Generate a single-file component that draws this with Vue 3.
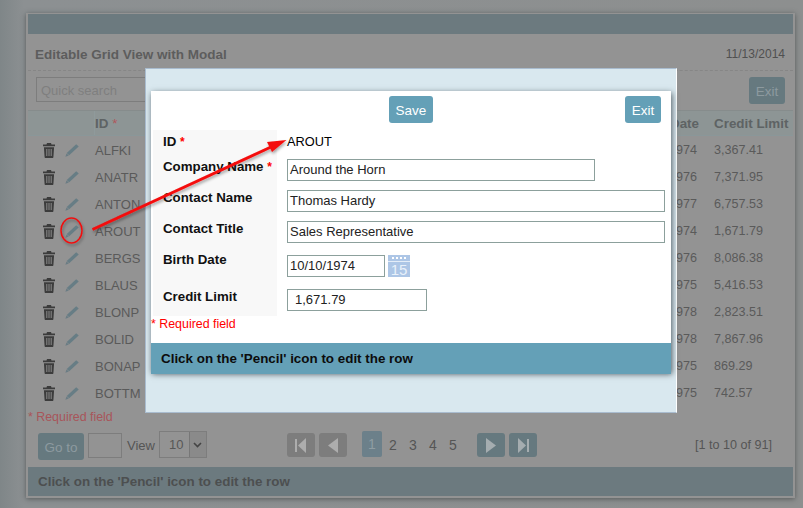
<script setup>
const rows = [
  ['ALFKI', '1974', '3,367.41'],
  ['ANATR', '1976', '7,371.95'],
  ['ANTON', '1977', '6,757.53'],
  ['AROUT', '1974', '1,671.79'],
  ['BERGS', '1976', '8,086.38'],
  ['BLAUS', '1975', '5,416.53'],
  ['BLONP', '1978', '2,823.51'],
  ['BOLID', '1978', '7,867.96'],
  ['BONAP', '1975', '869.29'],
  ['BOTTM', '1975', '742.57'],
]
const fields = [
  { label: 'Company Name', req: true, value: 'Around the Horn', cls: 'f-company' },
  { label: 'Contact Name', value: 'Thomas Hardy', cls: 'f-wide' },
  { label: 'Contact Title', value: 'Sales Representative', cls: 'f-wide' },
]
</script>

<template>
  <div class="page">
    <section class="panel">
      <div class="topbar"></div>
      <header class="title-row">
        <h1>Editable Grid View with Modal</h1>
        <span class="today">11/13/2014</span>
      </header>
      <div class="toolbar">
        <div class="search">
          <span>Quick search</span>
          <svg class="search-ico" width="14" height="14" viewBox="0 0 14 14"><circle cx="9" cy="5" r="3.5" fill="none" stroke="#666" stroke-width="1.5"/><path d="M6.5 7.500 2 12" stroke="#666" stroke-width="2"/></svg>
        </div>
        <button class="btn dim exit-top">Exit</button>
      </div>
      <div class="grid-head">
        <div class="c-act"></div>
        <div class="c-id">ID <em>*</em></div>
        <div class="c-mid"></div>
        <div class="c-date head-date">Date</div>
        <div class="c-credit">Credit Limit</div>
      </div>
      <div v-for="r in rows" :key="r[0]" class="grid-row">
        <div class="c-act">
          <svg class="trash" width="12" height="15" viewBox="0 0 12 15"><path d="M4 0h4l.5 1.400H12v1.800H0V1.400h3.500zM.9 4.200h10.200l-.7 9.800c0 .6-.4 1-1 1H2.600c-.6 0-1-.4-1-1z" fill="#3c3c3c"/><path d="M3.800 6v7M6 6v7M8.200 6v7" stroke="#8a8a8a" stroke-width="1"/></svg>
          <svg class="pencil" width="14" height="13" viewBox="0 0 14 13"><path d="M11.200.3 13.700 2.600 4.200 11.300 1.700 9z" fill="#677d85"/><path d="M1.500 9.400 3.900 11.600.4 12.800z" fill="#6a7c84"/></svg>
        </div>
        <div class="c-id">{{ r[0] }}</div>
        <div class="c-mid"></div>
        <div class="c-date">10/10/{{ r[1] }}</div>
        <div class="c-credit">{{ r[2] }}</div>
      </div>
      <div class="req-back">* Required field</div>
      <div class="pager">
        <button class="btn dim goto">Go to</button>
        <div class="go-input"></div>
        <span class="view">View</span>
        <div class="select"><span>10</span><i><svg width="9" height="6" viewBox="0 0 9 6"><path d="M1 1l3.500 3.500L8 1" fill="none" stroke="#444" stroke-width="1.600"/></svg></i></div>
        <div class="nav gray first">
          <svg width="12" height="15" viewBox="0 0 12 15"><path d="M0 1h2v13H0zM11 0v15L3 7.500z" fill="#adadad"/></svg>
        </div>
        <div class="nav gray">
          <svg width="10" height="15" viewBox="0 0 10 15"><path d="M10 0v15L0 7.500z" fill="#adadad"/></svg>
        </div>
        <div class="pages">
          <span class="on">1</span><span>2</span><span>3</span><span>4</span><span>5</span>
        </div>
        <div class="nav blue">
          <svg width="10" height="15" viewBox="0 0 10 15"><path d="M0 0v15l10-7.500z" fill="#a5adb0"/></svg>
        </div>
        <div class="nav blue">
          <svg width="12" height="15" viewBox="0 0 12 15"><path d="M10 1h2v13h-2zM1 0v15l8-7.500z" fill="#a5adb0"/></svg>
        </div>
        <span class="count">[1 to 10 of 91]</span>
      </div>
      <footer class="foot-back">Click on the 'Pencil' icon to edit the row</footer>
    </section>

    <div class="modal">
      <div class="dialog">
        <div class="dlg-actions">
          <button class="btn save">Save</button>
          <button class="btn exit">Exit</button>
        </div>
        <div class="form">
          <div class="row r-id">
            <div class="lab">ID <em>*</em></div>
            <div class="val id-val">AROUT</div>
          </div>
          <div v-for="f in fields" :key="f.label" class="row">
            <div class="lab">{{ f.label }} <em v-if="f.req">*</em></div>
            <div class="val"><div class="input" :class="f.cls">{{ f.value }}</div></div>
          </div>
          <div class="row r-birth">
            <div class="lab">Birth Date</div>
            <div class="val birth">
              <div class="input f-birth">10/10/1974</div>
              <div class="cal"><span class="cal-top"><b></b><b></b><b></b><b></b></span><span class="cal-num">15</span></div>
            </div>
          </div>
          <div class="row">
            <div class="lab">Credit Limit</div>
            <div class="val"><div class="input f-credit">1,671.79</div></div>
          </div>
        </div>
        <div class="req">* Required field</div>
        <div class="dlg-foot">Click on the 'Pencil' icon to edit the row</div>
      </div>
    </div>

    <svg class="marks" width="803" height="508" viewBox="0 0 803 508">
      <defs>
        <filter id="sh" x="-20%" y="-20%" width="140%" height="140%"><feDropShadow dx="1" dy="2" stdDeviation="1.500" flood-color="#000" flood-opacity=".35"/></filter>
      </defs>
      <g filter="url(#sh)">
        <ellipse cx="71.500" cy="230.500" rx="10.500" ry="12.500" fill="none" stroke="#f01010" stroke-width="1.500"/>
        <path d="M92.500 229.500 271 147" stroke="#f40b0b" stroke-width="3" fill="none"/>
        <path d="M286.500 140 267 142 272 152z" fill="#f40b0b"/>
      </g>
    </svg>
  </div>
</template>

<style>
html, body { margin: 0; }
</style>

<style scoped>
.page {
  position: relative;
  width: 803px;
  height: 508px;
  overflow: hidden;
  padding: 13px 0 0 26px;
  box-sizing: border-box;
  background: linear-gradient(90deg, #7f8688 0, #8c9092 3%, #8d8f8f 100%);
  font: 13px "Liberation Sans", Arial, sans-serif;
  color: #575757;
}
em { font-style: normal; font-weight: normal; color: #b0585c; }
.panel {
  width: 769px;
  height: 485px;
  box-sizing: border-box;
  padding: 1px 2px 0;
  background: #939393;
  box-shadow: 0 1px 5px rgba(40, 45, 45, .55);
  display: flex;
  flex-direction: column;
}
.topbar { height: 20px; background: #6c7a7f; flex: none; }
.title-row {
  height: 37px;
  flex: none;
  display: flex;
  align-items: center;
  justify-content: space-between;
  padding: 4px 8px 0 7px;
  box-sizing: border-box;
  border-bottom: 1px dashed #868686;
}
h1 { margin: 0; font-size: 13.5px; font-weight: bold; color: #5d5d5d; }
.today { font-size: 12px; color: #505050; }
.toolbar {
  height: 39px;
  flex: none;
  display: flex;
  justify-content: space-between;
  align-items: flex-start;
  padding: 6px 8px 0 8px;
  box-sizing: border-box;
}
.search {
  width: 130px;
  height: 25px;
  box-sizing: border-box;
  border: 1px solid #7d7d7d;
  display: flex;
  align-items: center;
  justify-content: space-between;
  padding: 1px 4px 0;
  color: #7f7f7f;
}
.btn {
  border: 0;
  border-radius: 3px;
  font: 13.5px "Liberation Sans", Arial, sans-serif;
  padding: 1px 0 0;
}
.btn.dim { background: #66797f; color: #8d9a9f; }
.exit-top { width: 36px; height: 27px; }
.grid-head, .grid-row { display: flex; align-items: center; flex: none; }
.grid-head {
  height: 26px;
  background: #8d9595;
  font-weight: bold;
  font-size: 13.4px;
  color: #5e6364;
  border-top: 1px solid #868c8c;
  border-bottom: 1px solid #8a9799;
  box-sizing: border-box;
}
.grid-row { height: 27px; box-sizing: border-box; padding-top: 1px; color: #5a5a5a; }
.c-act { width: 67px; height: 100%; display: flex; align-items: center; flex: none; box-sizing: border-box; padding: 0 0 0 15px; gap: 10px; }
.grid-head .c-act { border-right: 1px solid #8f9a9b; }
.c-id { width: 100px; flex: none; }
.c-mid { flex: 1; }
.c-date { width: 80px; flex: none; white-space: nowrap; }
.head-date { text-align: right; padding-right: 15px; box-sizing: border-box; }
.c-credit { width: 79px; flex: none; white-space: nowrap; }
.grid-row .c-date, .grid-row .c-credit { font-size: 12.6px; }
.req-back { height: 21px; flex: none; font-size: 12.4px; line-height: 22px; color: #a8555a; }
.pager {
  height: 40px;
  flex: none;
  display: flex;
  align-items: flex-start;
  padding: 6px 0 0 10px;
  box-sizing: border-box;
}
.goto { width: 46px; height: 27px; }
.go-input { width: 34px; height: 25px; box-sizing: border-box; border: 1px solid #7d7d7d; margin-left: 4px; }
.view { margin-left: 5px; line-height: 25px; color: #555; }
.select {
  width: 48px;
  height: 27px;
  margin: -2px 0 0 4px;
  box-sizing: border-box;
  border: 1px solid #7d7d7d;
  display: flex;
  line-height: 25px;
}
.select span { flex: 1; padding-left: 9px; }
.select i { width: 16px; background: #8a8a8a; border-left: 1px solid #777; display: flex; align-items: center; justify-content: center; }
.nav {
  width: 28px;
  height: 24px;
  border-radius: 3px;
  display: flex;
  align-items: center;
  justify-content: center;
  margin-left: 4px;
}
.nav.gray { background: #7d7d7d; }
.nav.blue { background: #66797f; }
.nav.first { margin-left: 80px; }
.pages { display: flex; align-items: center; width: 111px; margin-left: 15px; height: 24px; }
.pages span { width: 20px; text-align: center; line-height: 24px; color: #555; font-size: 14px; }
.pages .on { background: #6c808a; color: #8f9da3; height: 26px; line-height: 26px; margin-top: -2px; border-radius: 2px; margin-right: 1px; }
.count { margin-left: auto; margin-right: 21px; line-height: 25px; font-size: 12.6px; color: #555; white-space: nowrap; }
.foot-back {
  height: 29px;
  flex: none;
  background: #6c7a7f;
  font-weight: bold;
  font-size: 13.4px;
  line-height: 30px;
  padding-left: 10px;
  color: #4d4f50;
}

.modal {
  position: absolute;
  left: 145px;
  top: 68px;
  width: 532px;
  height: 345px;
  box-sizing: border-box;
  background: #d9e8ef;
  border: 1px solid #a9bccf;
  border-right-color: #fff;
  padding: 22px 5px 0;
}
.dialog {
  height: 281px;
  background: #fff;
  box-shadow: 1px 2px 6px rgba(30, 40, 45, .75);
  display: flex;
  flex-direction: column;
  color: #000;
}
.dlg-actions {
  height: 39px;
  flex: none;
  display: flex;
  align-items: flex-start;
  padding: 5px 10px 0 238px;
  box-sizing: border-box;
  justify-content: space-between;
}
.save { width: 44px; height: 27px; background: #64a0b7; color: #fff; }
.exit { width: 36px; height: 27px; background: #64a0b7; color: #fff; }
.form { flex: none; }
.row { display: flex; height: 31px; }
.r-id { height: 25px; }
.r-birth { height: 37px; }
.lab {
  width: 114px;
  margin-left: 2px;
  padding-left: 10px;
  background: #f8f8f8;
  font-weight: bold;
  font-size: 13.3px;
  line-height: 24px;
  white-space: nowrap;
  color: #111;
}
.lab em { color: #f00; font-weight: bold; font-size: 12px; }
.val { padding: 4px 0 0 10px; }
.id-val { padding-top: 0; line-height: 24px; font-size: 12.8px; }
.birth { display: flex; padding-top: 7px; gap: 3px; }
.input {
  height: 22px;
  box-sizing: border-box;
  border: 1px solid #8ca09c;
  line-height: 20px;
  padding-left: 2px;
  color: #222;
  white-space: nowrap;
}
.f-company { width: 308px; }
.f-wide { width: 378px; }
.f-birth { width: 98px; }
.f-credit { width: 140px; padding-left: 7px; }
.cal {
  width: 22px;
  height: 22px;
  background: #adc6e6;
  display: flex;
  flex-direction: column;
  align-items: center;
}
.cal-top { width: 100%; height: 7px; box-sizing: border-box; border-bottom: 1px solid #e4edf8; display: flex; gap: 2px; align-items: center; justify-content: center; flex: none; }
.cal-top b { width: 2px; height: 2px; background: #fff; display: block; }
.cal-num { color: #e9f1fa; font-size: 15px; line-height: 15px; }
.req { font-size: 12.4px; line-height: 17px; color: #f00; height: 27px; flex: none; }
.dlg-foot {
  flex: 1;
  background: #64a0b7;
  font-weight: bold;
  font-size: 13.4px;
  line-height: 31px;
  padding-left: 10px;
  color: #0c0c0c;
}
.marks { position: absolute; left: 0; top: 0; pointer-events: none; }
</style>
